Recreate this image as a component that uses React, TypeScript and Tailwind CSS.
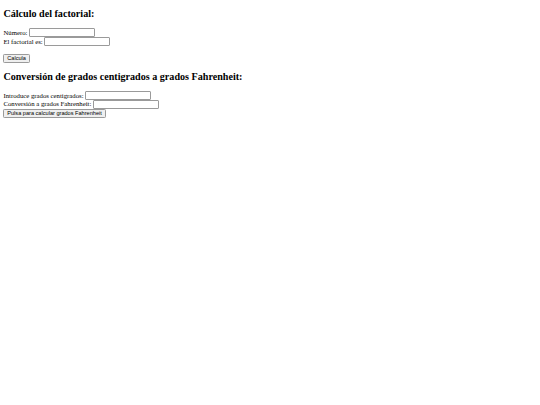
const fieldClass =
  "w-[66px] h-[8.86px] border-[0.6px] border-[#9a9a9a] rounded-[1px] bg-white px-[0.8px] text-[5.6px] font-['Liberation_Sans',Arial,sans-serif] outline-none";

const buttonClass =
  "h-[8.86px] px-[2.9px] border-[0.6px] border-[#9a9a9a] rounded-[1.3px] bg-[#efefef] text-[5.6px] leading-none text-black font-['Liberation_Sans',Arial,sans-serif]";

const Row = ({ label }: { label: string }) => (
  <div className="flex items-baseline h-[8.86px]">
    <span>{label}</span>
    <input type="text" className={`ml-[1.7px] ${fieldClass}`} />
  </div>
);

export default function App() {
  return (
    <div className="min-h-[405px] bg-white text-black px-[3.4px] pt-[8.4px] font-['Liberation_Serif','Times_New_Roman',serif] text-[6.75px] leading-[1.15]">
      {/* Factorial */}
      <h2 className="text-[10.125px] font-bold leading-[1.15] mb-[8.4px]">Cálculo del factorial:</h2>
      <Row label="Número:" />
      <Row label="El factorial es:" />
      <div className="h-[7.76px]" />
      <div className="flex items-start h-[8.86px]">
        <button type="button" className={buttonClass}>Calcula</button>
      </div>

      {/* Fahrenheit */}
      <h2 className="text-[10.125px] font-bold leading-[1.15] mt-[8.4px] mb-[8.4px]">
        Conversión de grados centigrados a grados Fahrenheit:
      </h2>
      <Row label="Introduce grados centigrados:" />
      <Row label="Conversión a grados Fahrenheit:" />
      <div className="flex items-start h-[8.86px]">
        <button type="button" className={buttonClass}>Pulsa para calcular grados Fahrenheit</button>
      </div>
    </div>
  );
}
